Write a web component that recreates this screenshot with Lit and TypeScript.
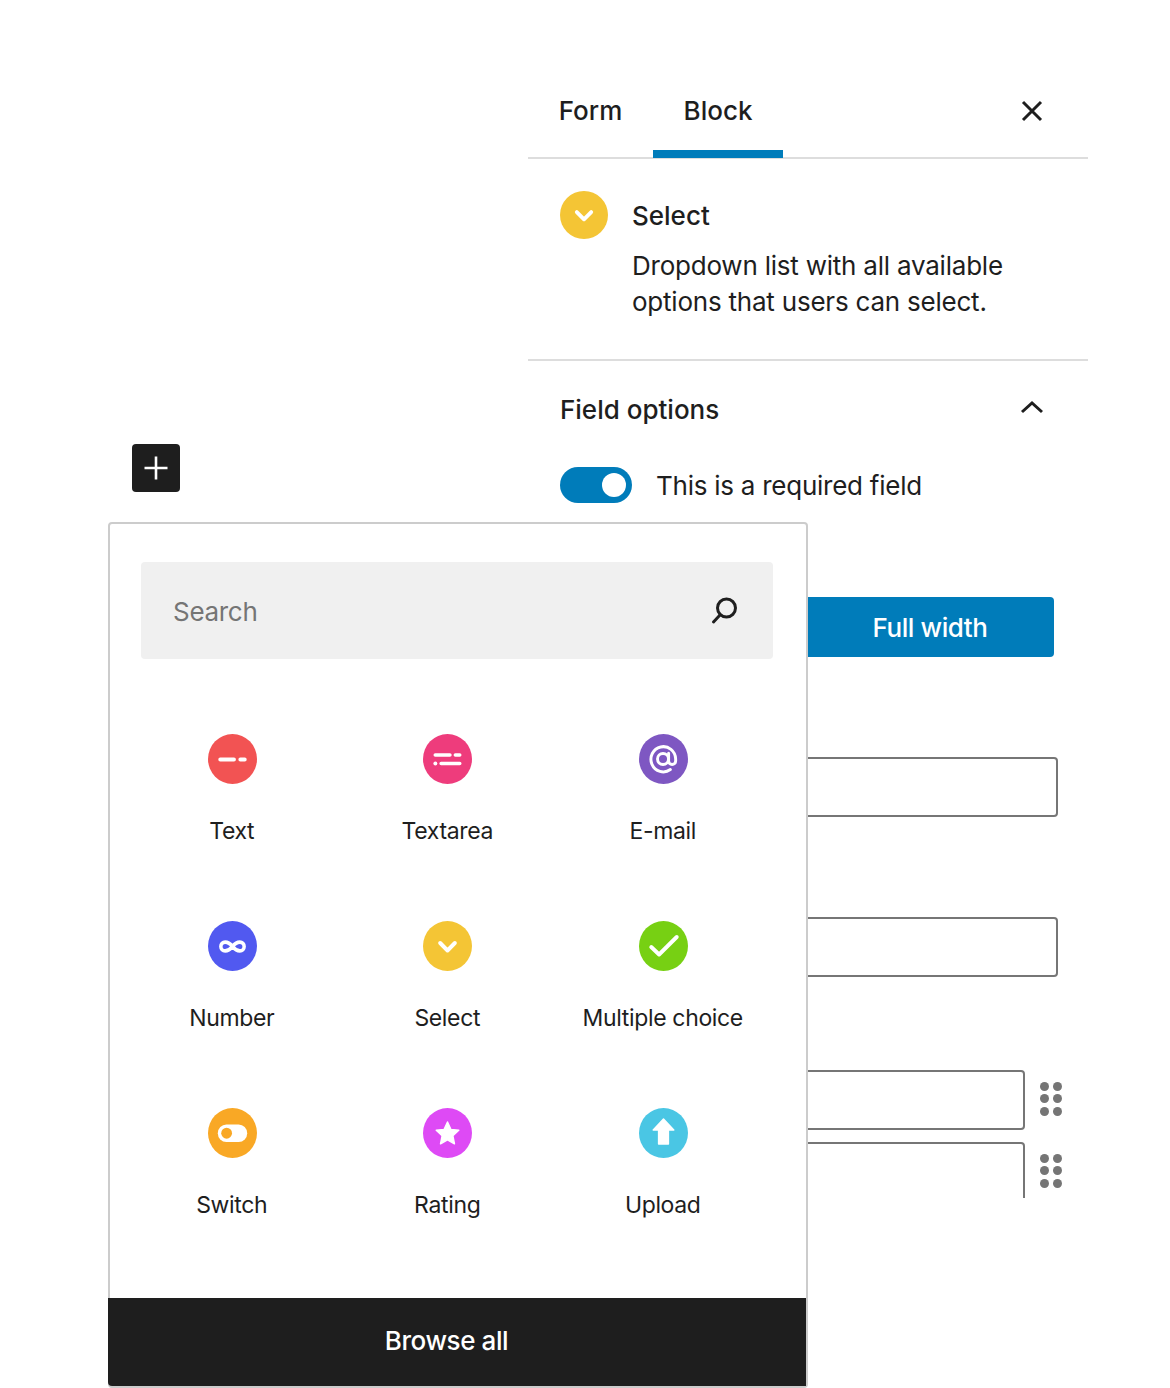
import { LitElement, html, css, svg } from "lit";
import { customElement } from "lit/decorators.js";

const chevronIcon = svg`<path d="M17.5 22 L25 29.5 L32.5 22" fill="none" stroke="#fff" stroke-width="4" stroke-linecap="round" stroke-linejoin="round"/>`;

const items = [
  { label: "Text", color: "#f25353", icon: svg`<path d="M12.5 25.5H26.5M33 25.5H37.5" fill="none" stroke="#fff" stroke-width="4" stroke-linecap="round"/>` },
  { label: "Textarea", color: "#ee3c7c", icon: svg`<path d="M12.5 21H27.5M33 21H37.5M18.5 29.5H37.5" fill="none" stroke="#fff" stroke-width="3.6" stroke-linecap="round"/><circle cx="12.6" cy="29.5" r="2" fill="#fff"/>` },
  { label: "E-mail", color: "#7e57c2", icon: svg`<g fill="none" stroke="#fff" stroke-width="3" stroke-linecap="round" stroke-linejoin="round"><circle cx="24.5" cy="25" r="5.6"/><path d="M30.2 19.3V27a3.6 3.6 0 0 0 7.2 0V25A12.6 12.6 0 1 0 32 35.6"/></g>` },
  { label: "Number", color: "#5159f0", icon: svg`<path d="M25 25.5c-2.200-2.700-4.700-4.400-7.500-4.400a4.400 4.400 0 0 0 0 8.800c2.800 0 5.300-1.700 7.500-4.400c2.200-2.700 4.700-4.400 7.500-4.400a4.400 4.400 0 0 1 0 8.800c-2.800 0-5.300-1.700-7.500-4.400z" fill="none" stroke="#fff" stroke-width="3.6"/>` },
  { label: "Select", color: "#f4c535", icon: chevronIcon },
  { label: "Multiple choice", color: "#77d013", icon: svg`<path d="M12.5 26L20.500 33.500L38.500 16" fill="none" stroke="#fff" stroke-width="4" stroke-linecap="round" stroke-linejoin="round"/>` },
  { label: "Switch", color: "#f9a825", icon: svg`<rect x="10" y="16.500" width="30" height="17.500" rx="8.750" fill="#fff"/><circle cx="19" cy="25.200" r="5.500" fill="#f9a825"/>` },
  { label: "Rating", color: "#de4af5", icon: svg`<polygon points="25,14 28.400,21.400 36.500,22.300 30.500,27.800 32.100,35.800 25,31.800 17.900,35.800 19.500,27.800 13.500,22.300 21.600,21.400" fill="#fff" stroke="#fff" stroke-width="1.500" stroke-linejoin="round"/>` },
  { label: "Upload", color: "#4ac6e4", icon: svg`<path d="M25 11L35.500 22H30V36H20V22H14.500Z" fill="#fff" stroke="#fff" stroke-width="1.500" stroke-linejoin="round"/>` },
];

@customElement("app-root")
export class AppRoot extends LitElement {
  static styles = css`
    :host {
      display: block;
      position: relative;
      width: 1170px;
      height: 1388px;
      overflow: hidden;
      background: #fff;
      color: #1e1e1e;
      font-family: Inter, "Noto Sans", sans-serif;
    }
    * { box-sizing: border-box; }
    svg { display: block; }

    .sidebar {
      width: 560px;
      margin-left: 528px;
      height: 1198px;
      overflow: hidden;
    }
    .tabs {
      display: flex;
      align-items: flex-start;
      height: 159px;
      box-shadow: inset 0 -2px 0 #ddd;
      position: relative;
    }
    .tab {
      height: 158px;
      padding-top: 94px;
      font-size: 26px;
      line-height: 34px;
      font-weight: 500;
      text-align: center;
    }
    .tab.form { width: 125px; }
    .tab.block { width: 130px; border-bottom: 8px solid #007cba; }
    .close { margin: 97px 42px 0 auto; }

    .info {
      display: flex;
      gap: 24px;
      height: 202px;
      padding: 32px 0 0 32px;
      border-bottom: 2px solid #ddd;
    }
    .info-text { display: flex; flex-direction: column; }
    .info-title { font-size: 26px; line-height: 50px; font-weight: 500; }
    .info-desc { font-size: 26px; line-height: 36px; margin-top: 7px; letter-spacing: -0.22px; }

    .options { padding: 0 34px 0 32px; }
    .options-head {
      display: flex;
      justify-content: space-between;
      align-items: center;
      height: 98px;
    }
    .options-title { font-size: 26px; font-weight: 500; line-height: 34px; }
    .chev { margin: -6px 10px 0 0; }
    .toggle-row { display: flex; align-items: center; gap: 24px; margin-top: 8px; height: 36px; }
    .toggle {
      width: 72px;
      height: 36px;
      border-radius: 18px;
      background: #007cba;
      display: flex;
      align-items: center;
      justify-content: flex-end;
      padding-right: 6px;
    }
    .knob { width: 24px; height: 24px; border-radius: 50%; background: #fff; }
    .toggle-label { font-size: 26px; line-height: 36px; letter-spacing: -0.25px; padding-top: 2px; }

    .segments { display: flex; justify-content: flex-end; margin-top: 94px; }
    .segment {
      width: 248px;
      height: 60px;
      display: flex;
      align-items: center;
      justify-content: center;
      background: #007cba;
      color: #fff;
      font-size: 26px;
      font-weight: 500;
      letter-spacing: -0.4px;
      padding-top: 1px;
      border-radius: 0 4px 4px 0;
    }
    .input {
      display: block;
      height: 60px;
      border: 2px solid #767676;
      border-radius: 4px;
    }
    .full { width: 498px; }
    .first { margin-top: 100px; }
    .second { margin-top: 100px; }
    .opt-row { display: flex; align-items: center; gap: 15px; }
    .opt-row .input { width: 465px; flex: none; }
    .opt-row.r1 { margin-top: 93px; }
    .opt-row.r2 { margin-top: 12px; }
    .dots {
      display: grid;
      grid-template-columns: repeat(2, 9px);
      gap: 3.5px;
      margin-bottom: 3px;
    }
    .dots i { display: block; width: 9px; height: 9px; border-radius: 50%; background: #757575; }

    .plus {
      position: absolute;
      left: 132px;
      top: 444px;
      width: 48px;
      height: 48px;
      background: #1e1e1e;
      border-radius: 4px;
      display: flex;
      align-items: center;
      justify-content: center;
    }

    .popover {
      position: absolute;
      left: 108px;
      top: 522px;
      width: 700px;
      height: 866px;
      background: #fff;
      border: 2px solid #ccc;
      border-radius: 4px;
      display: flex;
      flex-direction: column;
    }
    .search {
      margin: 38px 0 0 31px;
      width: 632px;
      height: 97px;
      flex: none;
      background: #f0f0f0;
      border-radius: 4px;
      display: flex;
      align-items: center;
      justify-content: space-between;
      padding: 0 34px 0 32px;
    }
    .placeholder { font-size: 26px; color: #757575; letter-spacing: -0.3px; padding-top: 2px; }
    .grid {
      display: grid;
      grid-template-columns: repeat(3, 215.5px);
      grid-auto-rows: 187px;
      margin: 75px 0 0 14.5px;
    }
    .item { display: flex; flex-direction: column; align-items: center; }
    .label { font-size: 23px; line-height: 32px; margin-top: 30.5px; padding-right: 1px; letter-spacing: -0.35px; white-space: nowrap; }
    .browse {
      margin: auto 0 0 -2px;
      width: 698px;
      height: 88px;
      flex: none;
      background: #1e1e1e;
      color: #fff;
      display: flex;
      align-items: center;
      justify-content: center;
      padding: 0 21px 4px 0;
      font-size: 26px;
      font-weight: 500;
      letter-spacing: -0.4px;
      border-radius: 0 0 0 4px;
    }
  `;

  private circle(color: string, icon: unknown, w = 49, h = 50) {
    return html`<svg width="${w}" height="${h}" viewBox="0 0 50 50" preserveAspectRatio="none">
      <circle cx="25" cy="25" r="25" fill="${color}"></circle>${icon}
    </svg>`;
  }

  private dots() {
    return html`<div class="dots">${[0, 1, 2, 3, 4, 5].map(() => html`<i></i>`)}</div>`;
  }

  render() {
    return html`
      <div class="sidebar">
        <div class="tabs">
          <div class="tab form">Form</div>
          <div class="tab block">Block</div>
          <svg class="close" width="28" height="28" viewBox="0 0 28 28">
            <path d="M5 5L23 23M23 5L5 23" fill="none" stroke="#1e1e1e" stroke-width="3"></path>
          </svg>
        </div>
        <div class="info">
          ${this.circle("#f4c535", chevronIcon, 48, 48)}
          <div class="info-text">
            <div class="info-title">Select</div>
            <div class="info-desc">Dropdown list with all available<br />options that users can select.</div>
          </div>
        </div>
        <div class="options">
          <div class="options-head">
            <div class="options-title">Field options</div>
            <svg class="chev" width="24" height="14" viewBox="0 0 24 14">
              <path d="M2 12L12 3L22 12" fill="none" stroke="#1e1e1e" stroke-width="3"></path>
            </svg>
          </div>
          <div class="toggle-row">
            <div class="toggle"><div class="knob"></div></div>
            <div class="toggle-label">This is a required field</div>
          </div>
          <div class="segments"><div class="segment">Full width</div></div>
          <div class="input full first"></div>
          <div class="input full second"></div>
          <div class="opt-row r1"><div class="input"></div>${this.dots()}</div>
          <div class="opt-row r2"><div class="input"></div>${this.dots()}</div>
        </div>
      </div>

      <div class="plus">
        <svg width="28" height="28" viewBox="0 0 28 28">
          <path d="M14 2.500V25.500M2.500 14H25.500" fill="none" stroke="#fff" stroke-width="2.600"></path>
        </svg>
      </div>

      <div class="popover">
        <div class="search">
          <span class="placeholder">Search</span>
          <svg width="30" height="30" viewBox="0 0 30 30">
            <circle cx="17.500" cy="12" r="9" fill="none" stroke="#1e1e1e" stroke-width="3"></circle>
            <path d="M11 19L4.500 26" fill="none" stroke="#1e1e1e" stroke-width="3" stroke-linecap="round"></path>
          </svg>
        </div>
        <div class="grid">
          ${items.map(
            (it) => html`<div class="item">
              ${this.circle(it.color, it.icon)}
              <div class="label">${it.label}</div>
            </div>`
          )}
        </div>
        <div class="browse">Browse all</div>
      </div>
    `;
  }
}
